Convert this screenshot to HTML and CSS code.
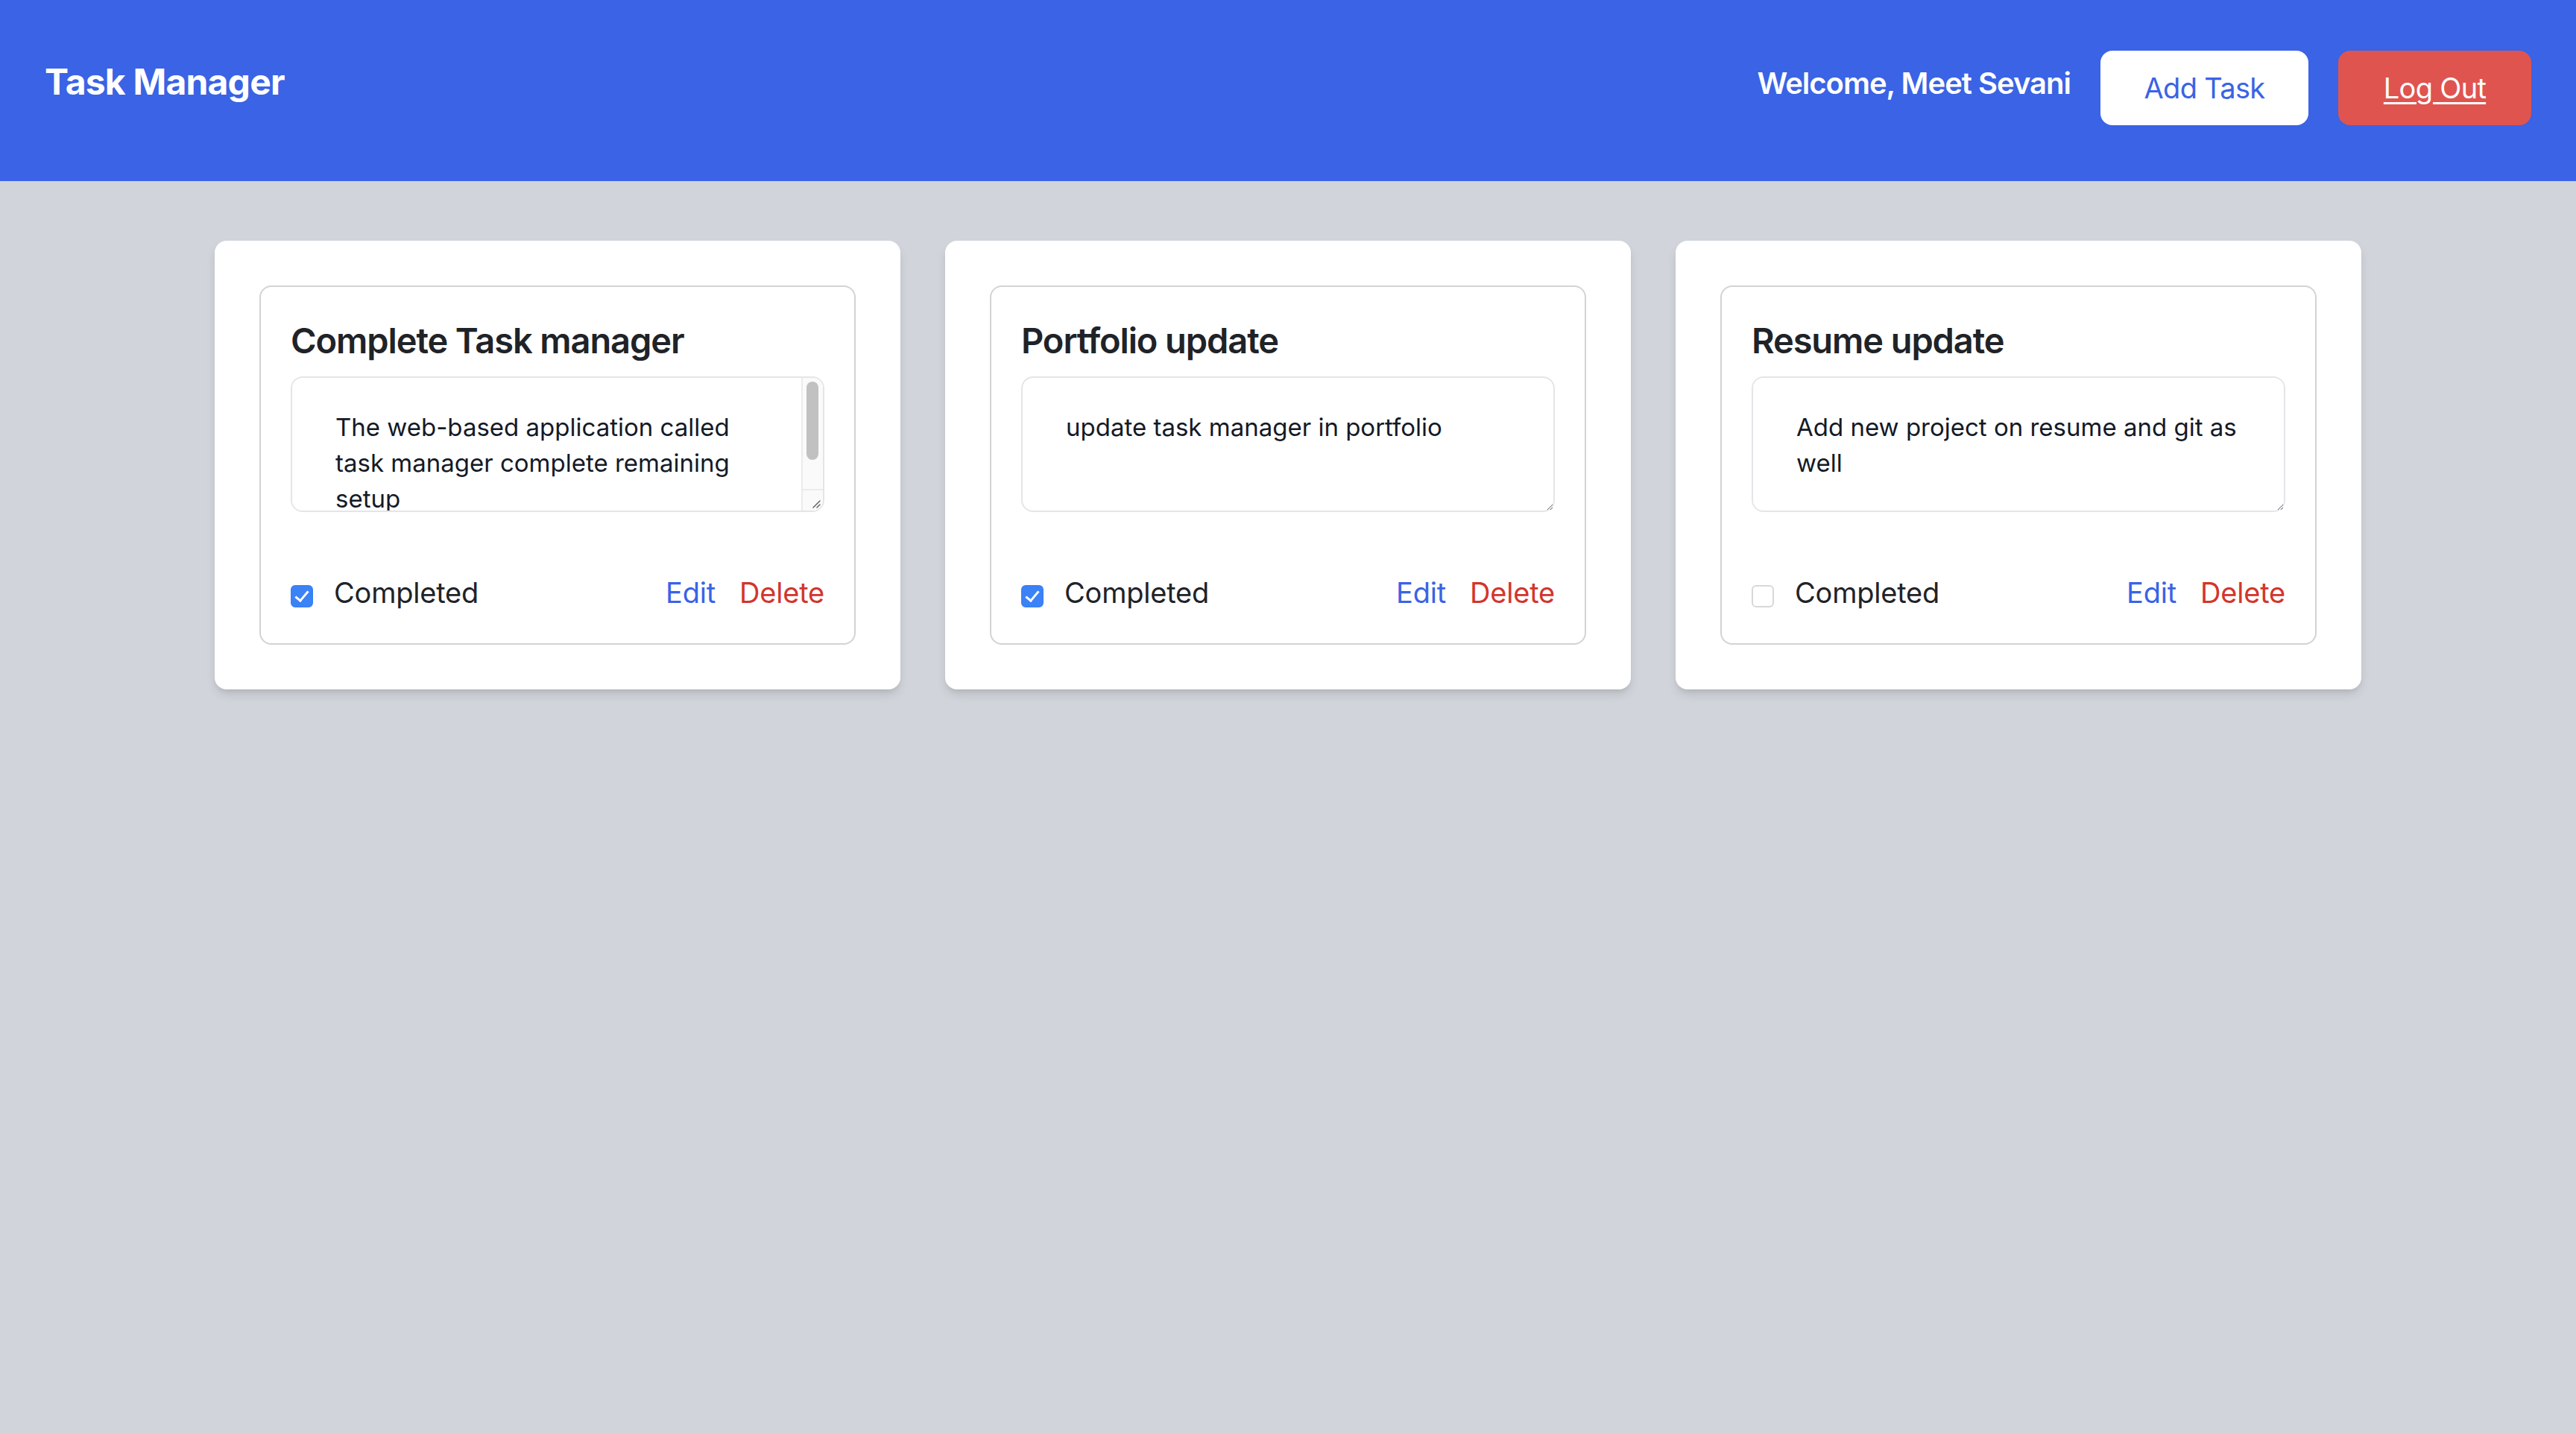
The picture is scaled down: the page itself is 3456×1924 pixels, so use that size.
FILE: index.html
```html
<!DOCTYPE html>
<html lang="en">
<head>
<meta charset="utf-8">
<title>Task Manager</title>
<link rel="stylesheet" href="styles.css">
</head>
<body>
<header class="topbar">
  <h1 class="brand">Task Manager</h1>
  <div class="actions">
    <span class="welcome">Welcome, Meet Sevani</span>
    <button class="btn btn-add" type="button">Add Task</button>
    <button class="btn btn-logout" type="button"><span class="under">Log Out</span></button>
  </div>
</header>
<main class="board">
  <div class="card">
    <div class="task">
      <h2 class="task-title">Complete Task manager</h2>
      <div class="desc-wrap">
        <textarea class="task-desc task-desc-scroll" readonly>The web-based application called task manager complete remaining setup</textarea>
        <div class="fake-scroll" aria-hidden="true">
          <div class="fake-thumb"></div>
          <div class="fake-corner">
            <svg class="grip" width="16" height="16" viewBox="0 0 16 16"><path d="M14 5 L5 14 M14 10 L10 14" stroke="#6b6b6b" stroke-width="1.6" fill="none" stroke-linecap="round"/></svg>
          </div>
        </div>
      </div>
      <div class="task-foot">
        <label class="done"><input type="checkbox" class="check" checked><span>Completed</span></label>
        <div class="links"><a class="edit">Edit</a><a class="delete">Delete</a></div>
      </div>
    </div>
  </div>
  <div class="card">
    <div class="task">
      <h2 class="task-title">Portfolio update</h2>
      <div class="desc-wrap">
        <textarea class="task-desc" readonly>update task manager in portfolio</textarea>
      </div>
      <div class="task-foot">
        <label class="done"><input type="checkbox" class="check" checked><span>Completed</span></label>
        <div class="links"><a class="edit">Edit</a><a class="delete">Delete</a></div>
      </div>
    </div>
  </div>
  <div class="card">
    <div class="task">
      <h2 class="task-title">Resume update</h2>
      <div class="desc-wrap">
        <textarea class="task-desc" readonly>Add new project on resume and git as well</textarea>
      </div>
      <div class="task-foot">
        <label class="done"><input type="checkbox" class="check"><span>Completed</span></label>
        <div class="links"><a class="edit">Edit</a><a class="delete">Delete</a></div>
      </div>
    </div>
  </div>
</main>
</body>
</html>
```
FILE: styles.css
```css
html, body {
  margin: 0;
  padding: 0;
}
body {
  background: #d1d5db;
  min-height: 100vh;
  font-family: Inter, "Noto Sans", "Liberation Sans", sans-serif;
}

.topbar {
  display: flex;
  justify-content: space-between;
  align-items: flex-start;
  box-sizing: border-box;
  height: 243px;
  padding: 68px 60px 0 60px;
  background: #3a63e5;
}
.brand {
  margin: 18px 0 0 0;
  font-size: 48px;
  line-height: 1;
  font-weight: 700;
  letter-spacing: -0.8px;
  color: #ffffff;
}
.actions {
  display: flex;
  align-items: flex-start;
  gap: 40px;
}
.welcome {
  margin-top: 24px;
  font-size: 40px;
  line-height: 1;
  font-weight: 600;
  letter-spacing: -1px;
  color: #ffffff;
}
.btn {
  box-sizing: border-box;
  height: 100px;
  padding: 0;
  border: none;
  border-radius: 16px;
  font-family: inherit;
  font-size: 38px;
  line-height: 100px;
  font-weight: 400;
  letter-spacing: -0.7px;
  text-align: center;
  cursor: pointer;
}
.btn-add {
  width: 279px;
  background: #ffffff;
  color: #3a63e5;
}
.btn-logout {
  width: 259px;
  background: #df544f;
  color: #ffffff;
}
.under {
  text-decoration: underline;
  text-decoration-thickness: 3px;
  text-underline-offset: 5px;
}

.board {
  display: grid;
  grid-template-columns: repeat(3, 920px);
  gap: 60px;
  justify-content: center;
  padding-top: 80px;
}
.card {
  background: #ffffff;
  border-radius: 16px;
  padding: 60px;
  box-shadow: 0 8px 14px -2px rgba(0, 0, 0, 0.12), 0 4px 8px -4px rgba(0, 0, 0, 0.1);
}
.task {
  display: flex;
  flex-direction: column;
  border: 2px solid #d3d3d5;
  border-radius: 16px;
  padding: 40px;
}
.task-title {
  margin: 0 0 16px 0;
  font-size: 47px;
  line-height: 64px;
  font-weight: 600;
  letter-spacing: -1.1px;
  color: #1f2328;
}
.desc-wrap {
  position: relative;
}
.task-desc {
  display: block;
  box-sizing: border-box;
  width: 100%;
  height: 182px;
  margin: 0;
  padding: 42px 40px 64px 58px;
  border: 2px solid #e3e5e8;
  border-radius: 16px;
  font-family: inherit;
  font-size: 33px;
  line-height: 48px;
  color: #141a27;
  background: #ffffff;
  outline: none;
  overflow: auto;
}
.task-desc-scroll {
  padding-right: 69px;
  resize: none;
}
.fake-scroll {
  position: absolute;
  top: 2px;
  right: 2px;
  bottom: 2px;
  width: 29px;
  box-sizing: border-box;
  display: flex;
  flex-direction: column;
  background: #fafafa;
  border-left: 2px solid #ebebeb;
  border-top-right-radius: 14px;
  border-bottom-right-radius: 14px;
  overflow: hidden;
}
.fake-thumb {
  height: 105px;
  margin: 5px 6px 0 5px;
  border-radius: 8px;
  background: #c1c1c1;
}
.fake-corner {
  display: flex;
  align-items: flex-end;
  justify-content: flex-end;
  margin-top: auto;
  height: 29px;
  box-sizing: border-box;
  border-top: 2px solid #ebebeb;
}
.grip {
  display: block;
  margin: 0 2px 2px 0;
}
.task-foot {
  display: flex;
  justify-content: space-between;
  align-items: center;
  height: 56px;
  margin-top: 80px;
}
.done {
  display: flex;
  align-items: center;
  gap: 28px;
  font-size: 38px;
  line-height: 56px;
  letter-spacing: -0.2px;
  color: #1f2328;
}
.check {
  -webkit-appearance: none;
  appearance: none;
  position: relative;
  box-sizing: border-box;
  width: 30px;
  height: 30px;
  margin: 10px 0 0 0;
  border: 2px solid #d8d8d8;
  border-radius: 6px;
  background: #ffffff;
}
.check:checked {
  border-color: #3a80f6;
  background: #3b82f6;
}
.check:checked::after {
  content: "";
  position: absolute;
  left: 8px;
  top: 2px;
  width: 7px;
  height: 15px;
  border-right: 3px solid #ffffff;
  border-bottom: 3px solid #ffffff;
  transform: rotate(40deg);
}
.links {
  display: flex;
  gap: 32px;
  font-size: 38px;
  line-height: 56px;
  letter-spacing: -0.2px;
}
.edit {
  color: #3a63e5;
  cursor: pointer;
}
.delete {
  color: #d2352d;
  cursor: pointer;
}
```
